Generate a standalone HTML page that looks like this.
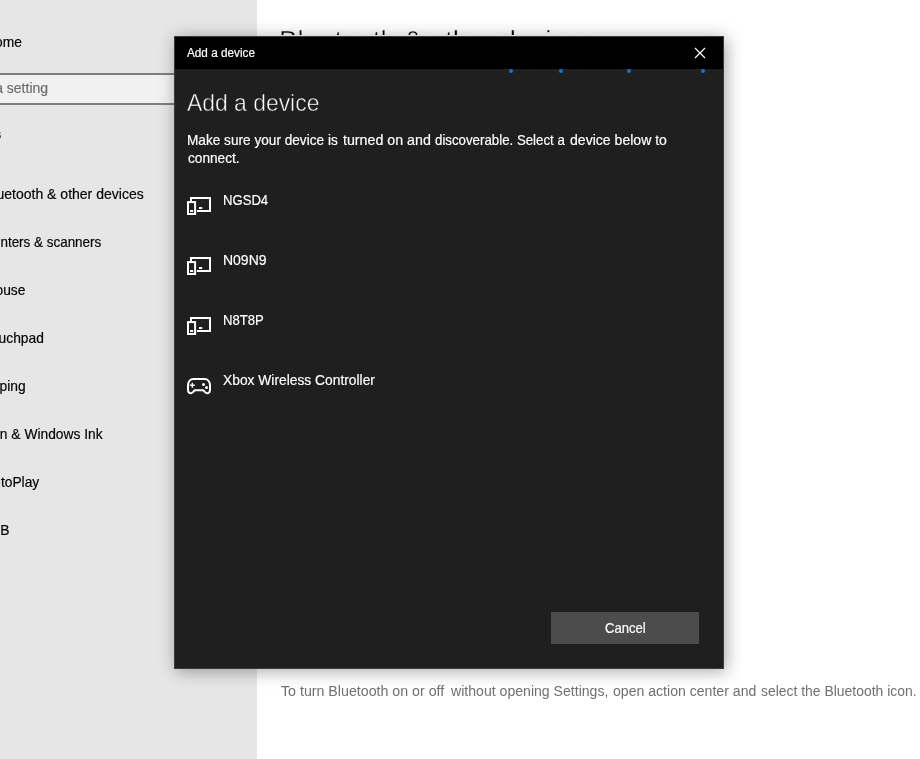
<!DOCTYPE html>
<html lang="en">
<head>
<meta charset="utf-8">
<title>Add a device</title>
<style>
html,body{margin:0;padding:0;}
body{width:920px;height:759px;overflow:hidden;position:relative;background:#fff;font-family:"Liberation Sans",Arial,sans-serif;}
#root{position:absolute;left:0;top:0;width:920px;height:759px;overflow:hidden;background:#fff;will-change:transform;}
.t{position:absolute;margin:0;padding:0;font-weight:normal;white-space:nowrap;line-height:1;transform-origin:0 0;display:block;-webkit-text-stroke:0.18px currentColor;}
.w{margin:0;padding:0;}
#side{position:absolute;left:0;top:0;width:257px;height:759px;background:#e6e6e6;overflow:hidden;}
#search{position:absolute;left:-40px;top:73px;width:280px;height:28px;border:2px solid #7e7e7e;background:#f1f1f1;}
#main{position:absolute;left:257px;top:0;width:663px;height:759px;background:#fff;}
#dlg{position:absolute;left:174px;top:36px;width:548px;height:631px;border:1px solid #3b3b3b;background:#1f1f1f;box-shadow:2px 2px 16px rgba(0,0,0,.36);}
#tbar{position:absolute;left:0;top:0;width:548px;height:32px;background:#000;}
#close{position:absolute;left:519px;top:10px;width:12px;height:12px;}
.dot{position:absolute;width:4px;height:4px;border-radius:50%;background:#0a78d6;top:32.1px;}
#cancel{position:absolute;left:376px;top:575px;width:148px;height:32px;background:#4c4c4c;border:0;padding:0;margin:0;font:inherit;}
#list{position:absolute;left:0;top:0;margin:0;padding:0;list-style:none;}
#list li{position:absolute;left:0;width:548px;height:60px;}
#list svg{position:absolute;left:10px;top:18px;width:28px;height:22px;overflow:visible;}
</style>
</head>
<body>
<div id="root">
<nav id="side">
  <span class="t" style="left:-14.88px;top:35.00px;font-size:14.5px;color:#000;transform:scaleX(0.9525);">Home</span>
  <div id="search"><span class="t" style="left:1.79px;top:6.00px;font-size:14.5px;color:#6b6b6b;transform:scaleX(0.9658);">Find a setting</span></div>
  <h2 class="t" style="left:-50.56px;top:127.00px;font-size:14.5px;color:#000;transform:scaleX(0.9525);font-weight:bold;">Devices</h2>
  <span class="t" style="left:-15.65px;top:187.00px;font-size:14.5px;color:#000;transform:scaleX(0.9664);">Bluetooth &amp; other devices</span>
  <span class="t" style="left:-15.82px;top:235.00px;font-size:14.5px;color:#000;transform:scaleX(0.9268);">Printers &amp; scanners</span>
  <span class="t" style="left:-16.09px;top:283.00px;font-size:14.5px;color:#000;transform:scaleX(0.9525);">Mouse</span>
  <span class="t" style="left:-15.64px;top:331.00px;font-size:14.5px;color:#000;transform:scaleX(0.9525);">Touchpad</span>
  <span class="t" style="left:-15.33px;top:379.00px;font-size:14.5px;color:#000;transform:scaleX(0.9525);">Typing</span>
  <span class="t" style="left:-17.36px;top:427.00px;font-size:14.5px;color:#000;transform:scaleX(0.9509);">Pen &amp; Windows Ink</span>
  <span class="t" style="left:-16.39px;top:475.00px;font-size:14.5px;color:#000;transform:scaleX(0.9525);">AutoPlay</span>
  <span class="t" style="left:-19.46px;top:523.00px;font-size:14.5px;color:#000;transform:scaleX(0.9525);">USB</span>

</nav>
<main id="main">
  <h1 class="t" style="left:21.85px;top:26.00px;font-size:28.4px;color:#000;transform:scaleX(0.9748);clip-path:inset(0 0 19.40px 0);-webkit-text-stroke:0.45px #f4f4f4;">Bluetooth &amp; other devices</h1>
  <p class="w"><span class="t" style="left:24.20px;top:684.00px;font-size:14.0px;color:#707070;transform:scaleX(1.0145);-webkit-text-stroke:0;">To turn Bluetooth on or off</span> <span class="t" style="left:194.01px;top:684.00px;font-size:14.0px;color:#707070;transform:scaleX(1.0061);-webkit-text-stroke:0;">without opening Settings,</span> <span class="t" style="left:356.00px;top:684.00px;font-size:14.0px;color:#707070;transform:scaleX(1.0060);-webkit-text-stroke:0;">open action center and</span> <span class="t" style="left:503.50px;top:684.00px;font-size:14.0px;color:#707070;transform:scaleX(0.9946);-webkit-text-stroke:0;">select the Bluetooth icon.</span></p>
</main>
<div id="dlg" role="dialog">
  <div id="tbar"><span class="t" style="left:12.00px;top:10.00px;font-size:12.3px;color:#fff;transform:scaleX(0.9557);">Add a device</span><svg id="close" viewBox="0 0 12 12"><path d="M1 1 L11 11 M11 1 L1 11" stroke="#fff" stroke-width="1.15" fill="none"/></svg></div>
  <i class="dot" style="left:333.5px"></i><i class="dot" style="left:383.5px"></i><i class="dot" style="left:451.7px"></i><i class="dot" style="left:525.5px"></i>
  <h1 class="t" style="left:12.40px;top:55.00px;font-size:23.7px;color:#fff;transform:scaleX(0.9665);-webkit-text-stroke:0.55px #1f1f1f;">Add a device</h1>
  <p class="w"><span class="t" style="left:11.83px;top:96.00px;font-size:14.1px;color:#fff;transform:scaleX(0.9669);">Make sure your device is</span> <span class="t" style="left:168.00px;top:96.00px;font-size:14.1px;color:#fff;transform:scaleX(1.0099);">turned on and</span> <span class="t" style="left:260.00px;top:96.00px;font-size:14.1px;color:#fff;transform:scaleX(0.9417);">discoverable. Select a</span> <span class="t" style="left:395.00px;top:96.00px;font-size:14.1px;color:#fff;transform:scaleX(0.9978);">device below to</span> <span class="t" style="left:12.50px;top:114.00px;font-size:14.1px;color:#fff;transform:scaleX(0.9682);">connect.</span></p>
  <ul id="list">
    <li style="top:142px"><svg viewBox="185 197 28 22"><g id="dev" fill="none" stroke="#fff" stroke-width="2"><rect x="191" y="198" width="19" height="13"/><rect x="187" y="201.2" width="9.9" height="14.6" fill="#1f1f1f" stroke="none"/><rect x="188" y="202.1" width="7.1" height="11.9"/><rect x="199" y="207" width="3.2" height="2" fill="#fff" stroke="none"/><rect x="190" y="210" width="3.2" height="2" fill="#fff" stroke="none"/></g></svg><span class="t" style="left:47.90px;top:14.00px;font-size:14.5px;color:#fff;transform:scaleX(0.9040);">NGSD4</span></li>
    <li style="top:202px"><svg viewBox="185 197 28 22"><use href="#dev"/></svg><span class="t" style="left:47.84px;top:14.00px;font-size:14.5px;color:#fff;transform:scaleX(0.9643);">N09N9</span></li>
    <li style="top:262px"><svg viewBox="185 197 28 22"><use href="#dev"/></svg><span class="t" style="left:47.90px;top:14.00px;font-size:14.5px;color:#fff;transform:scaleX(0.9043);">N8T8P</span></li>
    <li style="top:322px"><svg viewBox="185 377 28 22"><g fill="none" stroke="#fff" stroke-width="2" stroke-linejoin="round"><path d="M193.5 379 H204.5 C207.8 379 210 381.8 210 385.6 V389.4 C210 391.8 208.6 393.2 207 393.2 C205.4 393.2 204.5 392 203.2 390.2 H194.8 C193.5 392 192.6 393.2 191 393.2 C189.4 393.2 188 391.8 188 389.4 V385.6 C188 381.8 190.2 379 193.5 379 Z"/><path d="M189.8 385.2 H194.8 M192.3 382.7 V387.7" stroke-width="1.4"/><circle cx="203.5" cy="384.6" r="1.5" fill="#fff" stroke="none"/><circle cx="206.5" cy="387.6" r="1.5" fill="#fff" stroke="none"/></g></svg><span class="t" style="left:47.80px;top:14.00px;font-size:14.5px;color:#fff;transform:scaleX(0.9523);">Xbox Wireless Controller</span></li>
  </ul>
  <button id="cancel"><span class="t" style="left:54.20px;top:9.00px;font-size:14.2px;color:#fff;transform:scaleX(0.9202);">Cancel</span></button>
</div>
</div>
</body>
</html>
